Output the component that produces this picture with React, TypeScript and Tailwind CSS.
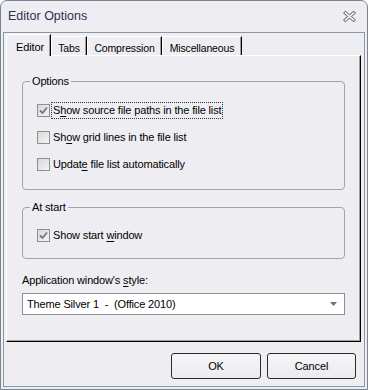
import type { ReactNode } from "react";

function CheckBox({ checked }: { checked?: boolean }) {
  return (
    <span className="flex size-[13px] shrink-0 items-center justify-center border border-[#8e8f8f] bg-gradient-to-br from-[#d8d8d8] to-[#f4f4f4]">
      {checked && (
        <svg width="9" height="9" viewBox="0 0 9 9">
          <path d="M1 4.5 L3.5 7 L8 1.5" fill="none" stroke="#767676" strokeWidth="1.8" />
        </svg>
      )}
    </span>
  );
}

function Option({ checked, focused, children }: { checked?: boolean; focused?: boolean; children: ReactNode }) {
  return (
    <div className="flex h-[17px] items-center">
      <CheckBox checked={checked} />
      <span
        className={
          "ml-[1px] block h-[17px] whitespace-pre px-[1px] leading-[15px] " +
          (focused ? "border border-dotted border-[#333]" : "border border-transparent")
        }
      >
        {children}
      </span>
    </div>
  );
}

function U({ children }: { children: ReactNode }) {
  return <span className="underline decoration-1 underline-offset-[2px]">{children}</span>;
}

function Group({ title, children, className }: { title: string; children: ReactNode; className?: string }) {
  return (
    <fieldset className={"rounded-[4px] border border-[#a2a2aa] " + (className ?? "")}>
      <legend className="ml-[7px] px-[2px] leading-[13px]">{title}</legend>
      <div className="pl-[14px]">{children}</div>
    </fieldset>
  );
}

const tabs = [
  { label: "Editor", w: "w-[45px]", active: true },
  { label: "Tabs", w: "w-[36px]" },
  { label: "Compression", w: "w-[75px]" },
  { label: "Miscellaneous", w: "w-[80px]" },
];

export default function App() {
  return (
    <div className="flex h-[390px] w-[368px] flex-col rounded-t-[7px] border border-[#7a8592] bg-[#eeeef2] font-['Liberation_Sans',Arial,sans-serif] text-[11px] tracking-[-0.15px] text-black">
      {/* title bar */}
      <div className="flex h-[31px] shrink-0 items-center justify-between pl-[7px] pr-[11px]">
        <span className="text-[12.5px] tracking-normal text-[#2f2f4f]">Editor Options</span>
        <svg width="13" height="11" viewBox="0 0 13 11">
          <path d="M2.5 2 L10.5 9 M10.5 2 L2.5 9" stroke="#7a808a" strokeWidth="3.6" strokeLinecap="square" />
          <path d="M2.5 2 L10.5 9 M10.5 2 L2.5 9" stroke="#ffffff" strokeWidth="1.4" strokeLinecap="square" />
        </svg>
      </div>

      {/* client area */}
      <div className="mx-[2px] mb-[2px] flex flex-1 flex-col border border-[#8d97a3] pl-[2px] pr-[3px] pt-[1px]">
        {/* tab strip */}
        <div className="flex h-[21px] items-end">
          {tabs.map((t) =>
            t.active ? (
              <div
                key={t.label}
                className={
                  t.w +
                  " relative z-10 -mb-[1px] flex h-[22px] items-start justify-center rounded-tl-[2px] border-l border-t border-r border-l-white border-t-white border-r-black bg-[#eeeef2] pl-[3px] pt-[4px] shadow-[inset_-1px_0_0_#a0a0a0]"
                }
              >
                {t.label}
              </div>
            ) : (
              <div
                key={t.label}
                className={
                  t.w +
                  " flex h-[19px] items-start justify-center rounded-tl-[2px] border-l border-t border-r border-l-white border-t-white border-r-black pt-[4px] text-[10.5px] shadow-[inset_-1px_0_0_#a0a0a0]"
                }
              >
                {t.label}
              </div>
            )
          )}
        </div>

        {/* tab panel */}
        <div className="flex h-[287px] flex-col border border-b-black border-l-white border-r-black border-t-white px-[15px] shadow-[inset_-1px_-1px_0_#a0a0a0]">
          <Group title="Options" className="mt-[19px] pb-[16px] pt-[14px]">
            <div className="flex flex-col gap-[10px]">
              <Option checked focused>
                S<U>h</U>ow source file paths in the file list
              </Option>
              <Option>
                Sh<U>o</U>w grid lines in the file list
              </Option>
              <Option>
                Updat<U>e</U> file list automatically
              </Option>
            </div>
          </Group>

          <Group title="At start" className="mt-[11px] pb-[14px] pt-[13px]">
            <Option checked>
              Show start <U>w</U>indow
            </Option>
          </Group>

          <div className="mt-[15px] leading-[13px]">
            Application window's <U>s</U>tyle:
          </div>
          <div className="mt-[6px] flex h-[22px] items-center justify-between border border-[#8f8f95] bg-white pl-[4px] pr-[7px]">
            <span className="whitespace-pre">Theme Silver 1  -  (Office 2010)</span>
            <svg width="7" height="4" viewBox="0 0 7 4">
              <path d="M0 0 H7 L3.5 4 Z" fill="#707070" />
            </svg>
          </div>
        </div>

        {/* buttons */}
        <div className="mt-[11px] flex justify-end gap-[6px] pr-[5px]">
          <button className="h-[26px] w-[90px] rounded-[3px] border border-[#2a2a2a] bg-gradient-to-b from-[#f6f6f8] to-[#ebebef] text-[11px]">
            OK
          </button>
          <button className="h-[26px] w-[89px] rounded-[3px] border border-[#2a2a2a] bg-gradient-to-b from-[#f6f6f8] to-[#ebebef] text-[11px]">
            Cancel
          </button>
        </div>
      </div>
    </div>
  );
}
